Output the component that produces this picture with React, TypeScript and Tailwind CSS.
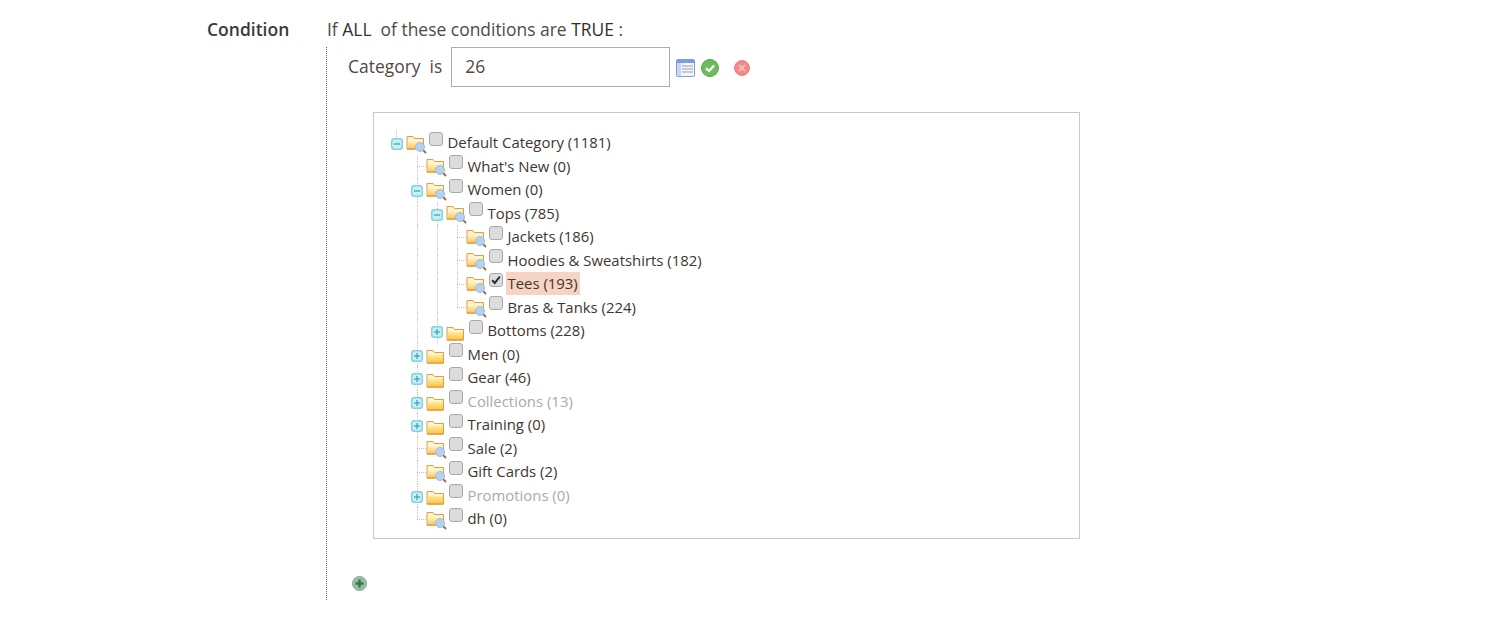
const FONT = "font-['Open_Sans',sans-serif]";

type Node = {
  label: string;
  depth: number;
  kind: "open" | "closed" | "leaf";
  // indent cells that still carry a vertical guide through this row
  guides: number[];
  last?: boolean;
  muted?: boolean;
  checked?: boolean;
};

const NODES: Node[] = [
  { label: "Default Category (1181)", depth: 0, kind: "open", guides: [] },
  { label: "What's New (0)", depth: 1, kind: "leaf", guides: [] },
  { label: "Women (0)", depth: 1, kind: "open", guides: [] },
  { label: "Tops (785)", depth: 2, kind: "open", guides: [1] },
  { label: "Jackets (186)", depth: 3, kind: "leaf", guides: [1, 2] },
  { label: "Hoodies & Sweatshirts (182)", depth: 3, kind: "leaf", guides: [1, 2] },
  { label: "Tees (193)", depth: 3, kind: "leaf", guides: [1, 2], checked: true },
  { label: "Bras & Tanks (224)", depth: 3, kind: "leaf", guides: [1, 2], last: true },
  { label: "Bottoms (228)", depth: 2, kind: "closed", guides: [1] },
  { label: "Men (0)", depth: 1, kind: "closed", guides: [] },
  { label: "Gear (46)", depth: 1, kind: "closed", guides: [] },
  { label: "Collections (13)", depth: 1, kind: "closed", guides: [], muted: true },
  { label: "Training (0)", depth: 1, kind: "closed", guides: [] },
  { label: "Sale (2)", depth: 1, kind: "leaf", guides: [] },
  { label: "Gift Cards (2)", depth: 1, kind: "leaf", guides: [] },
  { label: "Promotions (0)", depth: 1, kind: "closed", guides: [], muted: true },
  { label: "dh (0)", depth: 1, kind: "leaf", guides: [], last: true },
];

function Expander({ open }: { open: boolean }) {
  return (
    <svg width="12" height="12" viewBox="0 0 12 12" className="relative left-px top-[1.5px] z-10">
      <rect x="0.75" y="0.75" width="10.5" height="10.5" rx="2.5" fill="#c9eff5" stroke="#7fd3e2" strokeWidth="1.5" />
      <rect x="3" y="5.3" width="6" height="1.4" fill="#4aa8ba" />
      {!open && <rect x="5.3" y="3" width="1.4" height="6" fill="#4aa8ba" />}
    </svg>
  );
}

function Folder({ search }: { search: boolean }) {
  return (
    <svg width="21" height="20" viewBox="0 0 21 20">
      <defs>
        <linearGradient id="folderBody" x1="0" y1="0" x2="0" y2="1">
          <stop offset="0" stopColor="#fff4c8" />
          <stop offset="1" stopColor="#fac555" />
        </linearGradient>
        <linearGradient id="folderClosed" x1="0" y1="0" x2="0" y2="1">
          <stop offset="0" stopColor="#ffeb9c" />
          <stop offset="1" stopColor="#f9c23f" />
        </linearGradient>
      </defs>
      <path d="M1 2.5 L1 15 L17.5 15 L17.5 4.5 L8.5 4.5 L7 2.5 Z" fill="#fdf3cf" stroke="#e39c3e" />
      <path d="M2 15 L2 7 L17 7 L17 15 Z" fill={search ? "url(#folderBody)" : "url(#folderClosed)"} />
      <path d="M1 15 L17.5 15" stroke="#e39433" strokeWidth="1.2" />
      {search && (
        <>
          <line x1="16.5" y1="15.5" x2="20" y2="19" stroke="#9a6a40" strokeWidth="1.8" />
          <circle cx="14" cy="13" r="4.5" fill="#b5d1f0" stroke="#9dbde4" />
        </>
      )}
    </svg>
  );
}

function Check({ checked }: { checked?: boolean }) {
  return (
    <span className="flex h-[14px] w-[14px] items-center justify-center rounded-[3px] border border-[#a9a9a9] bg-[#dcdcdc]">
      {checked && (
        <svg width="10" height="10" viewBox="0 0 10 10">
          <path d="M1.2 5.2 L3.8 8 L8.8 1.6" fill="none" stroke="#2b2b2b" strokeWidth="2" />
        </svg>
      )}
    </span>
  );
}

function TreeRow({ node }: { node: Node }) {
  return (
    <div className="flex h-[23.5px] items-center">
      {Array.from({ length: node.depth }, (_, i) => (
        <span key={i} className="relative h-full w-5 shrink-0">
          {node.guides.includes(i) && (
            <span className="absolute left-[11px] top-0 h-full border-l border-dotted border-[#c4c4c4]" />
          )}
        </span>
      ))}
      <span className="relative flex h-full w-5 shrink-0 items-center justify-center">
        {node.depth === 0 && (
          <span className="absolute left-[10px] top-0 h-1/2 border-l border-dotted border-[#c4c4c4]" />
        )}
        {node.depth > 0 && node.kind !== "leaf" && (
          <span className="absolute left-[11px] top-0 h-full border-l border-dotted border-[#c4c4c4]" />
        )}
        {node.depth > 0 && node.kind === "leaf" && (
          <>
            <span
              className={`absolute left-[11px] top-0 border-l border-dotted border-[#c4c4c4] ${node.last ? "h-1/2" : "h-full"}`}
            />
            <span className="absolute left-[11px] top-1/2 w-[9px] border-t border-dotted border-[#c4c4c4]" />
          </>
        )}
        {node.kind !== "leaf" && <Expander open={node.kind === "open"} />}
      </span>
      <span className={`relative h-5 w-[23px] shrink-0 ${node.kind === "closed" ? "top-[4px]" : "top-[1px]"}`}>
        <Folder search={node.kind !== "closed"} />
      </span>
      <span className="relative top-[-4px] mr-[2.5px] shrink-0">
        <Check checked={node.checked} />
      </span>
      <span
        className={`px-[2px] text-[14.9px] leading-[23px] ${node.checked ? "bg-[#f6d3c3]" : ""} ${
          node.muted ? "text-[#aaaaaa]" : "text-[#41362f]"
        }`}
      >
        {node.label}
      </span>
    </div>
  );
}

export default function App() {
  return (
    <div className={`${FONT} flex h-[628px] w-[1485px] overflow-hidden bg-white pl-[207px] pt-[18px]`}>
      <div className="w-[119px] shrink-0 text-[17.5px] font-semibold leading-[23px] text-[#3a3a3a]">Condition</div>
      <div className="flex flex-col">
        <div className="h-[29px] pl-px text-[17.45px] leading-[23px] text-[#514943]">
          If <span className="text-[#303030]">ALL</span>&nbsp; of these conditions are{" "}
          <span className="text-[#303030]">TRUE</span> :
        </div>
        <div className="h-[553px] w-[760px] border-l border-dotted border-[#666] pl-[21px]">
          <div className="flex h-10 items-center text-[17.45px] text-[#514943]">
            <span className="pb-[2px]">Category&nbsp; is</span>
            <input
              readOnly
              value="26"
              className="ml-[9px] h-10 w-[219px] border border-[#adadad] bg-white px-[13px] pb-[2px] text-[17.45px] text-[#514943] outline-none"
            />
            <svg width="19" height="18" viewBox="0 0 19 18" className="ml-[6px] mt-[2px]">
              <rect x="0.5" y="0.5" width="18" height="17" rx="1" fill="#f1f4f8" stroke="#7f9fd1" />
              <rect x="1" y="1" width="17" height="3" fill="#7c9fdb" />
              <rect x="1" y="4" width="4" height="13" fill="#c5d8f2" />
              <path d="M6 7 H17 M6 10 H17 M6 13 H17" stroke="#9aa3ad" strokeWidth="1" />
            </svg>
            <svg width="18" height="18" viewBox="0 0 18 18" className="ml-[6px] mt-[2px]">
              <circle cx="9" cy="9" r="8.5" fill="#6fbb5e" stroke="#5aa24c" />
              <path d="M5 9.2 L8 12 L13 6.5" fill="none" stroke="#fff" strokeWidth="2.2" />
            </svg>
            <svg width="16" height="16" viewBox="0 0 16 16" className="ml-[15px] mt-[2px]">
              <circle cx="8" cy="8" r="7.5" fill="#f28a86" stroke="#e8807c" />
              <path d="M5 5 L11 11 M11 5 L5 11" stroke="#f3c0be" strokeWidth="1.8" />
            </svg>
          </div>
          <div className="ml-[25px] mt-[25px] h-[427px] w-[707px] border border-[#c8c8c8] pl-[12px] pt-[18px]">
            {NODES.map((n) => (
              <TreeRow key={n.label} node={n} />
            ))}
          </div>
          <div className="ml-[4px] mt-[37px]">
            <svg width="15" height="15" viewBox="0 0 15 15">
              <circle cx="7.5" cy="7.5" r="7" fill="#98bda3" stroke="#86ab92" />
              <path d="M7.5 3.5 V11.5 M3.5 7.5 H11.5" stroke="#2f7a47" strokeWidth="2.4" />
            </svg>
          </div>
        </div>
      </div>
    </div>
  );
}
